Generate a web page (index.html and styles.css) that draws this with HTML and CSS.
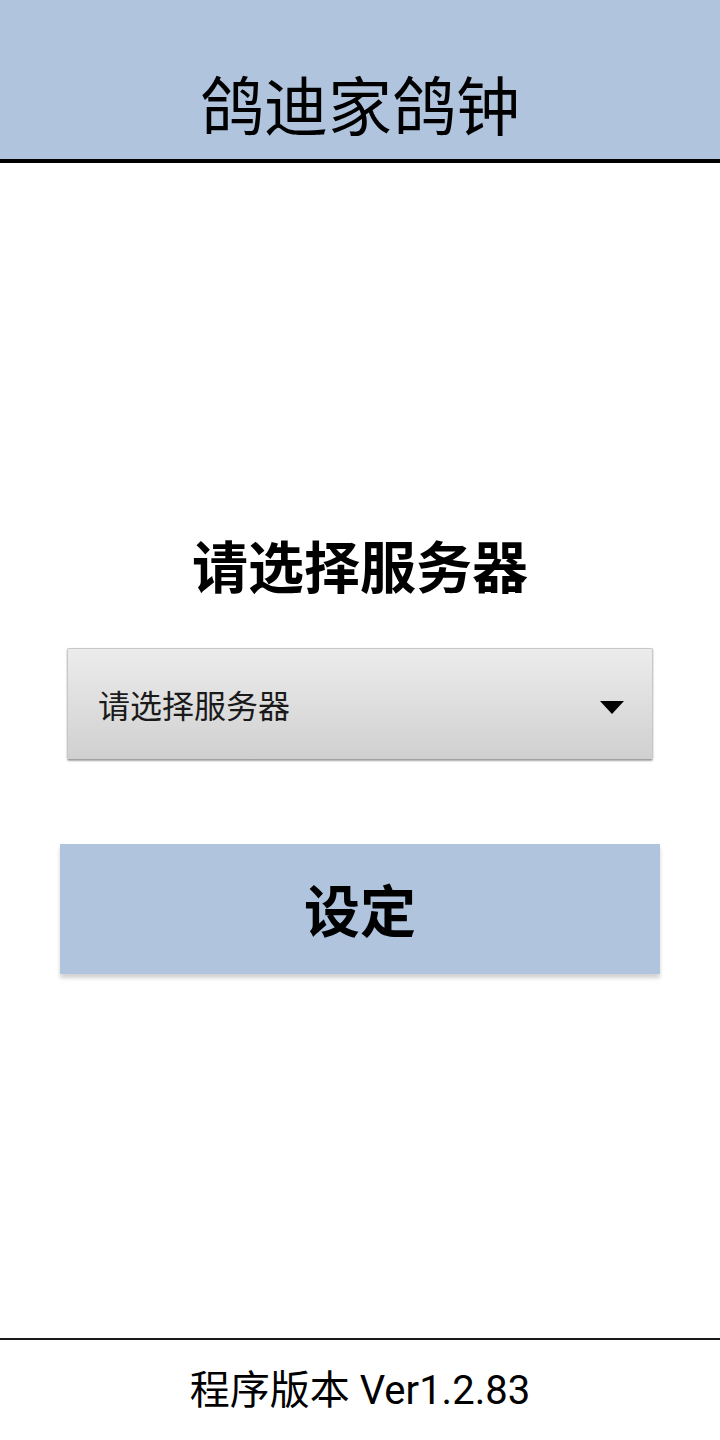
FILE: index.html
```html
<!DOCTYPE html>
<html lang="zh-CN">
<head>
<meta charset="utf-8">
<title>鸽迪家鸽钟</title>
<link rel="stylesheet" href="styles.css">
</head>
<body>
<div class="app">
  <header class="header">
    <h1 class="title">鸽迪家鸽钟</h1>
  </header>
  <main class="main">
    <h2 class="heading">请选择服务器</h2>
    <div class="spinner">
      <span class="spinner-text">请选择服务器</span>
      <svg class="caret" width="24" height="13" viewBox="0 0 24 13"><polygon points="0,0 24,0 12,13" fill="#000"/></svg>
    </div>
    <button class="set-btn">设定</button>
  </main>
  <footer class="footer">
    <div class="version">程序版本 Ver1.2.83</div>
  </footer>
</div>
</body>
</html>
```

FILE: styles.css
```css
* { box-sizing: border-box; }
html, body { margin: 0; padding: 0; }
body {
  width: 720px;
  height: 1440px;
  background: #fff;
  font-family: Roboto, "Noto Sans CJK SC", sans-serif;
  color: #000;
}
.app {
  display: flex;
  flex-direction: column;
  height: 1440px;
}
.header {
  height: 163px;
  background: #b0c4de;
  border-bottom: 4px solid #000;
  display: flex;
  align-items: center;
  justify-content: center;
  padding-top: 44px;
}
.title {
  margin: 0;
  font-family: "Noto Sans CJK SC", sans-serif;
  font-weight: 400;
  font-size: 64px;
  line-height: 1;
}
.main {
  flex: 1;
  display: flex;
  flex-direction: column;
  align-items: center;
  padding-top: 369px;
}
.heading {
  margin: 0;
  font-family: "Noto Sans CJK SC", sans-serif;
  font-weight: 700;
  font-size: 56px;
  line-height: 64px;
}
.spinner {
  margin-top: 52px;
  width: 586px;
  height: 112px;
  background: linear-gradient(#ececec, #d0d0d0);
  border: 1px solid #c8c8c8;
  border-bottom-color: #a0a0a0;
  box-shadow: 0 1px 2px rgba(0,0,0,0.35);
  border-radius: 2px;
  display: flex;
  align-items: center;
  justify-content: space-between;
  padding: 0 28px 0 30px;
}
.spinner-text {
  font-family: "Noto Sans CJK SC", sans-serif;
  font-size: 32px;
  color: #1a1a1a;
  line-height: 1;
}
.caret { display: block; margin-top: 6px; }
.set-btn {
  margin-top: 84px;
  width: 600px;
  height: 130px;
  background: #b0c4de;
  border: none;
  border-radius: 0;
  box-shadow: 0 4px 4px rgba(0,0,0,0.18);
  font-family: "Noto Sans CJK SC", sans-serif;
  font-weight: 700;
  font-size: 56px;
  color: #000;
  padding: 0 0 4px 0;
}
.footer {
  height: 102px;
  border-top: 2px solid #1a1a1a;
  display: flex;
  align-items: center;
  justify-content: center;
}
.version {
  font-family: Roboto, "Noto Sans CJK SC", sans-serif;
  font-size: 40px;
  line-height: 1;
  color: #000;
  padding-top: 2px;
}
```
